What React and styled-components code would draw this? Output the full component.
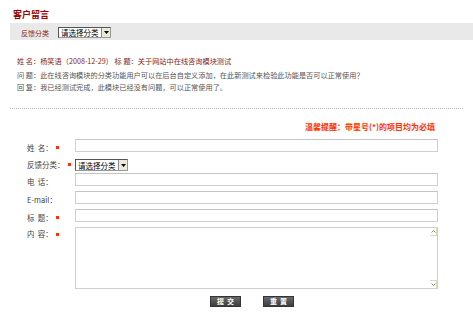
import React from "react"
import styled, { createGlobalStyle } from "styled-components"

const Global = createGlobalStyle`
  html, body { margin: 0; padding: 0; background: #fff; }
  body { font-family: "Noto Sans CJK SC", "DejaVu Sans", sans-serif; }
`

const Page = styled.div`
  width: 473px;
  height: 319px;
  padding-left: 10px;
  box-sizing: border-box;
  overflow: hidden;
`

const Title = styled.div`
  padding: 9px 0 0 3px;
  font-size: 9px;
  line-height: 11px;
  font-weight: bold;
  color: #990000;
`

const FilterBar = styled.div`
  margin-top: 3px;
  height: 17px;
  background: #e9e9e9;
  display: flex;
  align-items: center;
  padding: 2px 0 0 11px;
  box-sizing: border-box;
  gap: 9px;
`

const BarLabel = styled.span`
  font-size: 7px;
  line-height: 10px;
  color: #8b2a10;
`

const SelectWrap = styled.div`
  position: relative;
  flex: none;
  width: ${p => p.$w}px;
  height: ${p => p.$h}px;
`

const Select = styled.select`
  appearance: none;
  display: block;
  width: 100%;
  height: 100%;
  margin: 0;
  padding: 0 10px 0 2px;
  border: 1px solid #555;
  border-right-color: #999;
  border-bottom-color: #999;
  border-radius: 0;
  background: #fff;
  font-family: inherit;
  font-size: 7.5px;
  line-height: 9px;
  color: #000;
  box-sizing: border-box;
`

const ArrowBox = styled.span`
  position: absolute;
  right: 1px;
  top: 1px;
  bottom: 1px;
  width: 8px;
  background: #ece9d8;
  border-left: 1px solid #888;
  display: flex;
  align-items: center;
  justify-content: center;
  pointer-events: none;
`

const Message = styled.div`
  padding: 15px 0 0 7px;
  font-size: 7.2px;
  line-height: 12px;
  white-space: nowrap;
`

const MsgHead = styled.div`
  color: #8b1c0c;
  margin-bottom: 2px;
`

const MsgLine = styled.div`
  color: #555;
`

const Divider = styled.div`
  margin: 15px 10px 0 0;
  border-top: 1px dotted #bbb;
`

const Notice = styled.div`
  margin: 12px 38px 0 0;
  text-align: right;
  font-size: 8px;
  line-height: 12px;
  font-weight: bold;
  color: #ff3300;
`

const Form = styled.div`
  margin-top: 6px;
  padding-left: 17px;
`

const Row = styled.div`
  display: flex;
  align-items: ${p => (p.$top ? "flex-start" : "center")};
  height: ${p => p.$h}px;
`

const Label = styled.div`
  width: 48px;
  flex: none;
  display: flex;
  align-items: center;
  gap: 3px;
  font-size: 7.5px;
  line-height: 10px;
  color: #444;
  white-space: pre;
  padding-top: ${p => (p.$top ? 2 : 0)}px;
  margin-top: ${p => (p.$top ? 0 : -1)}px;
`

const Star = styled.span`
  width: 3px;
  height: 3px;
  background: #ff3300;
  display: inline-block;
`

const Input = styled.input`
  width: 363px;
  height: 13px;
  margin: 0;
  padding: 0;
  border: 1px solid #cfcfcf;
  border-top-color: #c4c4c4;
  box-sizing: border-box;
  background: #fff;
  align-self: flex-start;
`

const AreaWrap = styled.div`
  position: relative;
  width: 363px;
  height: 62px;
`

const TextArea = styled.textarea`
  width: 100%;
  height: 100%;
  margin: 0;
  padding: 0;
  border: 1px solid #cfcfcf;
  box-sizing: border-box;
  resize: none;
  overflow: hidden;
  display: block;
`

const ScrollArrow = styled.span`
  position: absolute;
  right: 1px;
  ${p => (p.$down ? "bottom: 1px;" : "top: 1px;")}
  width: 6px;
  height: 7px;
  border-right: 1px solid #d6dcb4;
  border-${p => (p.$down ? "top" : "bottom")}: 1px solid #d6dcb4;
  display: flex;
  align-items: center;
  justify-content: center;
`

const Buttons = styled.div`
  display: flex;
  justify-content: center;
  gap: 22px;
  margin: 7px 0 0 4px;
`

const Button = styled.button`
  width: 31px;
  height: 11px;
  padding: 0;
  border: 1px solid #333;
  background: linear-gradient(#6a6a6a, #3d3d3d);
  color: #fff;
  font-family: inherit;
  font-size: 7px;
  line-height: 9px;
  font-weight: bold;
  letter-spacing: 3px;
  text-indent: 3px;
`

const Chevron = ({ down }) => (
  <svg width="5" height="3" viewBox="0 0 5 3">
    <path d={down ? "M0.5 0.5 L2.5 2.5 L4.5 0.5" : "M0.5 2.5 L2.5 0.5 L4.5 2.5"} fill="none" stroke="#777" strokeWidth="0.8" />
  </svg>
)

const CategorySelect = ({ w, h }) => (
  <SelectWrap $w={w} $h={h}>
    <Select defaultValue="">
      <option value="">请选择分类</option>
    </Select>
    <ArrowBox>
      <svg width="5" height="3" viewBox="0 0 5 3">
        <path d="M0 0 L5 0 L2.5 3 Z" fill="#000" />
      </svg>
    </ArrowBox>
  </SelectWrap>
)

const fields = [
  { label: "姓  名：", star: true },
  { label: "反馈分类：", star: true, select: true, h: 16 },
  { label: "电  话：" },
  { label: "E-mail：" },
  { label: "标  题：", star: true },
]

export default function App() {
  return (
    <>
      <Global />
      <Page>
        <Title>客户留言</Title>
        <FilterBar>
          <BarLabel>反馈分类</BarLabel>
          <CategorySelect w={53} h={11} />
        </FilterBar>

        <Message>
          <MsgHead>姓 名：杨笑语（2008-12-29） 标 题：关于网站中在线咨询模块测试</MsgHead>
          <MsgLine>问 题：此在线咨询模块的分类功能用户可以在后台自定义添加，在此新测试来检验此功能是否可以正常使用？</MsgLine>
          <MsgLine>回 复：我已经测试完成，此模块已经没有问题，可以正常使用了。</MsgLine>
        </Message>

        <Divider />
        <Notice>温馨提醒：带星号(*)的项目均为必填</Notice>

        <Form>
          {fields.map(f => (
            <Row key={f.label} $h={f.h || 18}>
              <Label>
                {f.label}
                {f.star && <Star />}
              </Label>
              {f.select ? <CategorySelect w={53} h={12} /> : <Input type="text" />}
            </Row>
          ))}
          <Row $h={62} $top>
            <Label $top>
              {"内  容："}<Star />
            </Label>
            <AreaWrap>
              <TextArea />
              <ScrollArrow><Chevron /></ScrollArrow>
              <ScrollArrow $down><Chevron down /></ScrollArrow>
            </AreaWrap>
          </Row>
          <Buttons>
            <Button>提交</Button>
            <Button>重置</Button>
          </Buttons>
        </Form>
      </Page>
    </>
  )
}
